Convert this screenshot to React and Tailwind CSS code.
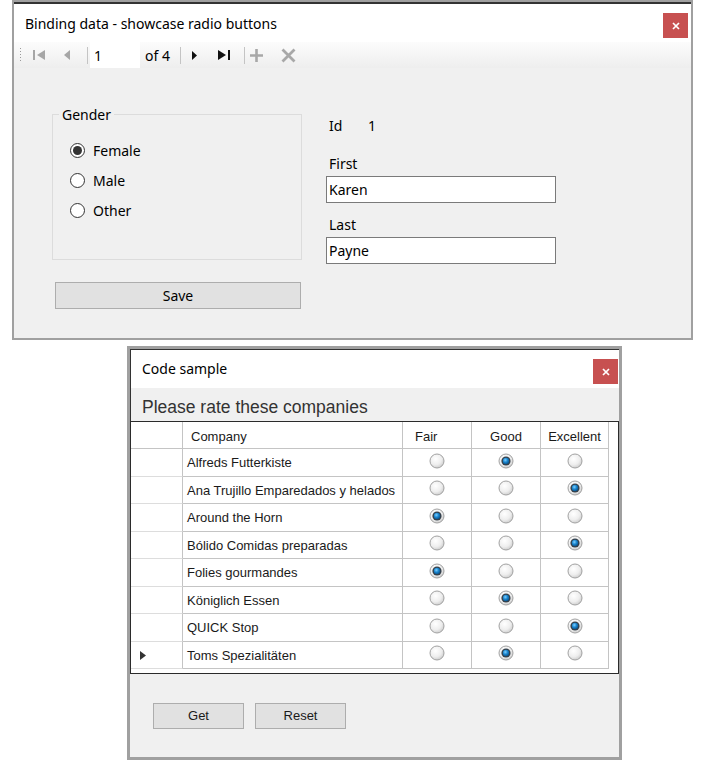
import React from "react";

const companies = [
  { name: "Alfreds Futterkiste", rating: "Good" },
  { name: "Ana Trujillo Emparedados y helados", rating: "Excellent" },
  { name: "Around the Horn", rating: "Fair" },
  { name: "Bólido Comidas preparadas", rating: "Excellent" },
  { name: "Folies gourmandes", rating: "Fair" },
  { name: "Königlich Essen", rating: "Good" },
  { name: "QUICK Stop", rating: "Excellent" },
  { name: "Toms Spezialitäten", rating: "Good" },
];

const ratings = ["Fair", "Good", "Excellent"];

const CloseButton = ({ className }) => (
  <div className={`w-[25px] h-[25px] bg-[#c75050] flex items-center justify-center ${className}`}>
    <svg width="8" height="8" viewBox="0 0 8 8">
      <path d="M1 1L7 7M7 1L1 7" stroke="white" strokeWidth="1.7" />
    </svg>
  </div>
);

const GridRadio = ({ checked }) => (
  <svg width="16" height="16" viewBox="0 0 16 16">
    <defs>
      <radialGradient id="rb-off" cx="0.4" cy="0.35" r="0.7">
        <stop offset="0" stopColor="#ffffff" />
        <stop offset="0.6" stopColor="#eeeeee" />
        <stop offset="1" stopColor="#c9c9c9" />
      </radialGradient>
      <radialGradient id="rb-on" cx="0.4" cy="0.35" r="0.7">
        <stop offset="0" stopColor="#7fd0ff" />
        <stop offset="0.5" stopColor="#1a86cf" />
        <stop offset="1" stopColor="#0a4f86" />
      </radialGradient>
    </defs>
    <circle cx="8" cy="8" r="7" fill="url(#rb-off)" stroke="#a2a2a2" strokeWidth="1" />
    {checked && (
      <>
        <circle cx="8" cy="8" r="4.6" fill="#36404a" />
        <circle cx="8" cy="8" r="3.2" fill="url(#rb-on)" />
      </>
    )}
  </svg>
);

const GenderRadio = ({ label, checked }) => (
  <div className="h-[30px] flex items-center">
    <div className="w-[15px] h-[15px] rounded-full border border-[#333] bg-white flex items-center justify-center">
      {checked && <div className="w-[9px] h-[9px] rounded-full bg-[#333]" />}
    </div>
    <span className="ml-[8px]">{label}</span>
  </div>
);

const Separator = ({ className }) => <div className={`w-px h-[17px] bg-[#c4c4c4] ${className}`} />;

export default function App() {
  return (
    <div className="w-[704px] h-[774px] bg-white font-['Noto_Sans',sans-serif] text-[14px] text-black">
      {/* Binding data window */}
      <div className="ml-[12px] w-[681px] h-[340px] border-2 border-[#a0a0a0] bg-[#f0f0f0] flex flex-col">
        <div className="h-[40px] bg-white border-t-2 border-[#333] flex justify-between">
          <div className="mt-[10px] ml-[11px] leading-[20px]">Binding data - showcase radio buttons</div>
          <CloseButton className="mt-[9px] mr-[3px]" />
        </div>

        {/* Navigator toolbar */}
        <div className="h-[26px] bg-linear-to-b from-[#fcfcfc] to-[#eeeeee] flex items-center">
          <svg className="ml-[5px]" width="3" height="16" viewBox="0 0 3 16">
            {[1, 4, 7, 10, 13].map((y) => (
              <rect key={y} x="1" y={y} width="1" height="1" fill="#9a9a9a" />
            ))}
          </svg>
          <svg className="ml-[11px]" width="12" height="10" viewBox="0 0 12 10">
            <rect x="0" y="0" width="2" height="10" fill="#a6a6a6" />
            <path d="M12 0L4 5L12 10Z" fill="#a6a6a6" />
          </svg>
          <svg className="ml-[19px]" width="6" height="10" viewBox="0 0 6 10">
            <path d="M6 0L0 5L6 10Z" fill="#a6a6a6" />
          </svg>
          <Separator className="ml-[17px]" />
          <div className="ml-[2px] w-[50px] self-stretch bg-white pl-[4px] flex items-center">1</div>
          <div className="ml-[5px] w-[35px]">of 4</div>
          <Separator />
          <svg className="ml-[11px]" width="5" height="9" viewBox="0 0 5 9">
            <path d="M0 0L5 4.5L0 9Z" fill="#111" />
          </svg>
          <svg className="ml-[21px]" width="14" height="10" viewBox="0 0 14 10">
            <path d="M0 0L8 5L0 10Z" fill="#111" />
            <rect x="10" y="0" width="2" height="10" fill="#111" />
          </svg>
          <Separator className="ml-[12px]" />
          <svg className="ml-[5px]" width="13" height="13" viewBox="0 0 13 13">
            <path d="M6.5 0V13M0 6.5H13" stroke="#a8a8a8" strokeWidth="2.6" />
          </svg>
          <svg className="ml-[18px]" width="15" height="15" viewBox="0 0 15 15">
            <path d="M1.5 1.5L13.5 13.5M13.5 1.5L1.5 13.5" stroke="#a8a8a8" strokeWidth="2.8" />
          </svg>
        </div>

        {/* Form body */}
        <div className="flex-1 flex pl-[38px] pt-[46px]">
          <div className="w-[250px]">
            <div className="relative h-[146px] border border-[#dcdcdc] pl-[17px] pt-[20px]">
              <span className="absolute -top-[10px] left-[6px] px-[3px] bg-[#f0f0f0] leading-[20px]">Gender</span>
              <GenderRadio label="Female" checked />
              <GenderRadio label="Male" />
              <GenderRadio label="Other" />
            </div>
            <button className="mt-[22px] ml-[3px] w-[246px] h-[27px] bg-[#e1e1e1] border border-[#adadad] flex items-center justify-center">
              Save
            </button>
          </div>

          <div className="ml-[24px] mt-[2px] w-[230px] leading-[20px]">
            <div className="flex pl-[3px]">
              <span className="w-[39px]">Id</span>
              <span>1</span>
            </div>
            <div className="mt-[18px] pl-[3px]">First</div>
            <div className="mt-[2px] h-[27px] border border-[#7a7a7a] bg-white px-[2px] flex items-center">Karen</div>
            <div className="mt-[12px] pl-[3px]">Last</div>
            <div className="mt-[2px] h-[27px] border border-[#7a7a7a] bg-white px-[2px] flex items-center">Payne</div>
          </div>
        </div>
      </div>

      {/* Code sample window */}
      <div className="mt-[6px] ml-[127px] w-[495px] h-[414px] border-[3px] border-[#a0a0a0] bg-[#f0f0f0] flex flex-col">
        <div className="h-[39px] bg-white border-t border-l border-[#333] flex justify-between">
          <div className="mt-[9px] ml-[11px] leading-[20px]">Code sample</div>
          <CloseButton className="mt-[9px] mr-[1px] h-[24px]" />
        </div>
        <div className="h-[33px] border-l border-[#333] pl-[11px] pt-[5px] flex items-center font-['Liberation_Sans',sans-serif] text-[17.5px] text-[#333]">
          Please rate these companies
        </div>

        <div className="h-[253px] border border-[#2b2b2b] bg-white font-['Liberation_Sans',sans-serif] text-[13px] text-[#1a1a1a]">
          <div className="grid grid-cols-[52px_220px_69px_69px_68px] w-max">
            <div className="h-[27px] border-r border-b border-[#c4c4c4]" />
            <div className="h-[27px] border-r border-b border-[#c4c4c4] pl-[8px] pt-[3px] flex items-center">Company</div>
            <div className="h-[27px] border-r border-b border-[#c4c4c4] pl-[12px] pt-[3px] flex items-center">Fair</div>
            <div className="h-[27px] border-r border-b border-[#c4c4c4] pt-[3px] flex items-center justify-center">Good</div>
            <div className="h-[27px] border-r border-b border-[#c4c4c4] pt-[3px] flex items-center justify-center">Excellent</div>

            {companies.map((c, i) => (
              <React.Fragment key={c.name}>
                <div className="h-[27.5px] border-r border-b border-r-[#c4c4c4] border-b-[#dddddd] pl-[9px] pt-[2px] flex items-center">
                  {i === companies.length - 1 && (
                    <svg width="6" height="9" viewBox="0 0 6 9">
                      <path d="M0 0L6 4.5L0 9Z" fill="#333" />
                    </svg>
                  )}
                </div>
                <div className="h-[27.5px] border-r border-b border-[#c4c4c4] pl-[4px] pt-[1px] flex items-center">{c.name}</div>
                {ratings.map((r) => (
                  <div key={r} className="h-[27.5px] border-r border-b border-[#c4c4c4] pb-[3px] flex items-center justify-center">
                    <GridRadio checked={c.rating === r} />
                  </div>
                ))}
              </React.Fragment>
            ))}
          </div>
        </div>

        <div className="flex-1 flex items-start pl-[23px] pt-[29px] gap-[11px] font-['Liberation_Sans',sans-serif] text-[13px] text-[#1a1a1a]">
          <button className="w-[91px] h-[26px] bg-[#e1e1e1] border border-[#adadad]">Get</button>
          <button className="w-[91px] h-[26px] bg-[#e1e1e1] border border-[#adadad]">Reset</button>
        </div>
      </div>
    </div>
  );
}
